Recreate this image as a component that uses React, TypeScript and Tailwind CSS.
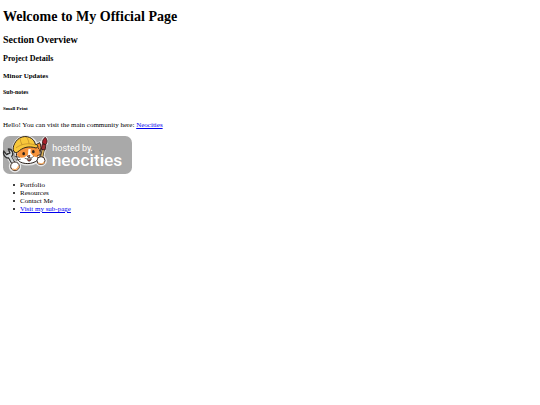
const LINKS = [
    { label: "Portfolio" },
    { label: "Resources" },
    { label: "Contact Me" },
    { label: "Visit my sub-page", href: "#sub-page" },
];

function NeocitiesBadge() {
    return (
        <svg className="block h-[38px] w-[129px] overflow-visible" viewBox="0 0 387 114" role="img" aria-label="Hosted by Neocities">
            <rect width="387" height="114" rx="20" fill="#a9a9a9" />

            {/* Light outline behind the mascot */}
            <g fill="#e9e9e9" stroke="#e9e9e9" strokeWidth="9" strokeLinecap="round" strokeLinejoin="round">
                <path d="M32 46C29 37 34 17 51 6C73 -4 96 8 99 25L112 20 114 44 111 63C103 80 86 85 70 84C54 83 42 72 40 49Z" />
                <path d="M16 57 36 91M114 72 122 28" fill="none" strokeWidth="17" />
                <path d="M119 23C117 14 122 8 127 5C133 13 133 20 127 28Z" />
                <circle cx="36" cy="91" r="14" />
                <circle cx="114" cy="74" r="13" />
            </g>

            {/* Wrench */}
            <g strokeLinecap="round" strokeLinejoin="round">
                <path d="M17 57 36 90" fill="none" stroke="#333" strokeWidth="13" />
                <path d="M2 45C-1 61 13 71 24 63C34 55 29 39 16 39L21 51 11 56Z" fill="#d4d8da" stroke="#333" strokeWidth="4" />
                <path d="M19 59 36 90" fill="none" stroke="#d4d8da" strokeWidth="7" />
            </g>

            {/* Cat head */}
            <g stroke="#2b211b" strokeWidth="3" strokeLinejoin="round" strokeLinecap="round">
                <path d="M94 29 110 20C115 29 115 40 111 49Z" fill="#f28f36" />
                <path d="M43 41C36 58 43 73 52 78C70 87 96 83 108 68C116 54 108 36 100 29L65 33Z" fill="#fff" />
                <path d="M44 43 42 58C48 68 63 68 73 58L82 50 91 60C99 67 108 62 110 53C110 43 105 34 99 30L66 34Z" fill="#f7933b" stroke="none" />
                <path d="M76 40 83 39 82 57 75 61Z" fill="#fff" stroke="none" />
                <path d="M34 48C25 43 32 17 50 6C70 -5 94 6 97 25C105 26 108 34 99 36C76 29 60 34 44 48C40 51 36 50 34 48Z" fill="#f8c83b" />
                <path d="M40 35C56 23 77 20 96 27M51 8C52 14 54 20 57 26M71 4C75 10 77 15 78 22" fill="none" stroke="#b58526" strokeWidth="2" />
                <ellipse cx="62" cy="53" rx="4" ry="5" fill="#2b211b" stroke="none" />
                <ellipse cx="91" cy="47" rx="4" ry="5" fill="#2b211b" stroke="none" />
                <path d="M73 60 81 58 78 64Z" fill="#c85c50" strokeWidth="2" />
                <path d="M66 67C72 70 76 68 78 64C83 67 89 65 92 61" fill="none" strokeWidth="2" />
                <path d="M73 71C75 78 84 77 85 69Z" fill="#a74839" strokeWidth="2" />
                <path d="M36 61 49 64M40 72 52 70M115 54 103 59M114 66 103 64" fill="none" strokeWidth="2" />
            </g>

            {/* Brush */}
            <path d="M122 34 114 73" fill="none" stroke="#2b211b" strokeWidth="9" strokeLinecap="round" />
            <path d="M122 36 114 73" fill="none" stroke="#d9b35d" strokeWidth="5" strokeLinecap="round" />
            <path d="M119 23C117 14 122 7 127 4C133 11 134 19 128 26Z" fill="#a91f2b" stroke="#401c1c" strokeWidth="3" />
            <path d="M118 24 129 26 126 42 115 40Z" fill="#9e3034" stroke="#401c1c" strokeWidth="3" />

            {/* Paws */}
            <circle cx="36" cy="91" r="13" fill="#fff" stroke="#403027" strokeWidth="3" />
            <path d="M28 98C36 104 45 100 47 90" fill="none" stroke="#f5ae69" strokeWidth="4" />
            <circle cx="114" cy="74" r="12" fill="#fff" stroke="#403027" strokeWidth="3" />
            <path d="M106 80C112 86 121 84 124 77" fill="none" stroke="#f5ae69" strokeWidth="4" />

            <text x="148" y="44" fill="#fff" className="font-[Roboto,sans-serif] text-[27px]">hosted by</text>
            <circle cx="266" cy="43" r="2" fill="#fff" />
            <text x="146" y="89" fill="#fff" className="font-[Roboto,sans-serif] text-[52px] font-medium">neocities</text>
        </svg>
    );
}

export default function App() {
    return (
        <main className="bg-white px-[3px] pt-2 font-['Liberation_Serif',serif] text-[7px] leading-[8px] text-black">
            <h1 className="text-[14px] leading-[18px] font-bold">Welcome to My Official Page</h1>
            <h2 className="mt-1.5 text-[10px] leading-4 font-bold">Section Overview</h2>
            <h3 className="mt-1.5 text-[8px] leading-[10px] font-bold">Project Details</h3>
            <h4 className="mt-2 text-[7px] leading-[8px] font-bold">Minor Updates</h4>
            <h5 className="mt-2 text-[6px] leading-[8px] font-bold">Sub-notes</h5>
            <h6 className="mt-2 text-[5px] leading-[10px] font-bold">Small Print</h6>
            <p className="mt-[7px]">
                Hello! You can visit the main community here:{" "}
                <a href="#neocities" className="text-[#0000ee] underline">Neocities</a>
            </p>
            <a href="#neocities" className="mt-[7px] inline-block align-top">
                <NeocitiesBadge />
            </a>
            <ul className="mt-[7px] pl-2.5">
                {LINKS.map((link) => (
                    <li key={link.label} className="flex items-center gap-[5px] before:size-0.5 before:rounded-full before:bg-black">
                        {link.href ? (
                            <a href={link.href} className="text-[#0000ee] underline">{link.label}</a>
                        ) : (
                            link.label
                        )}
                    </li>
                ))}
            </ul>
        </main>
    );
}
